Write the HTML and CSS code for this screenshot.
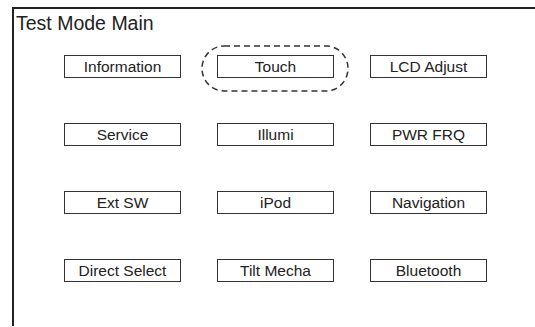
FILE: index.html
```html
<!DOCTYPE html>
<html lang="en">

<head>
    <meta charset="UTF-8" />
    <meta name="viewport" content="width=device-width, initial-scale=1.0" />
    <title>Test Mode Main</title>
    <link rel="stylesheet" href="styles.css">
</head>

<body>
    <div class="screen">
        <h1 class="title">Test Mode Main</h1>

        <div class="menu">
            <div class="item">Information</div>
            <div class="item selected">Touch
                <svg class="ring" width="148" height="47" viewBox="0 0 148 47">
                    <rect x="1" y="1" width="146" height="45" rx="22" ry="22.5" />
                </svg>
            </div>
            <div class="item">LCD Adjust</div>

            <div class="item">Service</div>
            <div class="item">Illumi</div>
            <div class="item">PWR FRQ</div>

            <div class="item">Ext SW</div>
            <div class="item">iPod</div>
            <div class="item">Navigation</div>

            <div class="item">Direct Select</div>
            <div class="item">Tilt Mecha</div>
            <div class="item">Bluetooth</div>
        </div>
    </div>
</body>

</html>
```

FILE: styles.css
```css
html,
body {
    margin: 0;
    background-color: white;
    overflow: hidden;
}

body {
    font-family: "Liberation Sans", Arial, Helvetica, sans-serif;
    color: #222;
    padding: 7px 0 0 12px;
}

.screen {
    border-top: 2px solid #222;
    border-left: 2px solid #222;
    height: 314px;
    padding: 3px 0 0 2px;
}

.title {
    margin: 0;
    font-size: 19.5px;
    font-weight: normal;
    line-height: 22px;
}

.menu {
    display: grid;
    grid-template-columns: repeat(3, 117px);
    grid-auto-rows: 23px;
    column-gap: 36px;
    row-gap: 45px;
    margin: 21px 0 0 48px;
}

.item {
    position: relative;
    border: 1px solid #333;
    font-size: 15.5px;
    line-height: 21px;
    text-align: center;
}

/* dashed ring around the current item */
.ring {
    position: absolute;
    top: -11px;
    left: -17px;
    pointer-events: none;
}

.ring rect {
    fill: none;
    stroke: #333;
    stroke-width: 1.5;
    stroke-dasharray: 6 4;
}
```
